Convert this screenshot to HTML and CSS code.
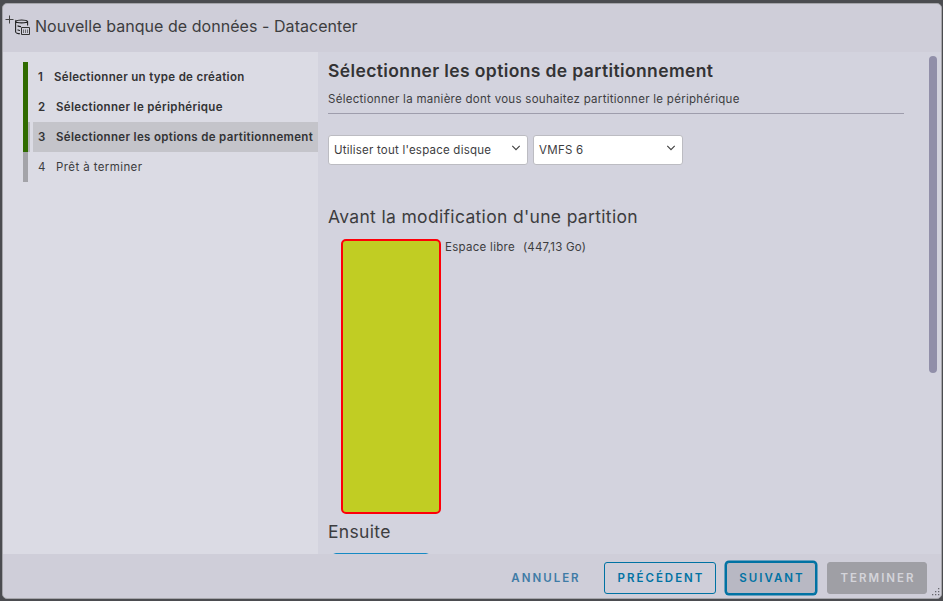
FILE: index.html
```
<!DOCTYPE html>
<html lang="fr">
<head>
<meta charset="utf-8">
<title>Nouvelle banque de données</title>
<link rel="stylesheet" href="styles.css">
</head>
<body>
<div class="modal">
  <header class="header">
    <svg class="title-icon" width="28" height="24" viewBox="0 0 28 24" fill="none" stroke="#222">
      <path d="M.5 5.5h8M4.5 1.5v8" stroke="#444"/>
      <path d="M10.6 7.5c1-2 11-2 12 0-1 1.8-11 1.8-12 0v10.3c0 1 2.3 2 4.4 2M22.6 7.5V11.500M12.500 11.8c1 .6 2 .8 3.500.8M12.500 15.800c1 .5 1.500.7 2.500.7" stroke-width="1.100"/>
      <path d="M16.500 13.500h8v7h-8z" stroke="#333"/>
      <path d="M18.500 15.500v3.500M20.500 15.500v3.500M22.500 15.500v3.500" stroke="#555" stroke-width=".8"/>
    </svg>
    <h1 class="title">Nouvelle banque de données - Datacenter</h1>
  </header>
  <div class="body">
    <nav class="sidebar">
      <ol class="steps">
        <li class="step done"><span class="num">1</span><span class="label first">Sélectionner un type de création</span></li>
        <li class="step done"><span class="num">2</span><span class="label">Sélectionner le périphérique</span></li>
        <li class="step done current"><span class="num">3</span><span class="label">Sélectionner les options de partitionnement</span></li>
        <li class="step"><span class="num">4</span><span class="label">Prêt à terminer</span></li>
      </ol>
    </nav>
    <main class="content">
      <div class="page">
        <h2 class="heading">Sélectionner les options de partitionnement</h2>
        <p class="intro">Sélectionner la manière dont vous souhaitez partitionner le périphérique</p>
        <div class="fields">
          <div class="select wide"><span class="usage">Utiliser tout l'espace disque</span><svg width="10" height="6" viewBox="0 0 10 6"><path d="M1.3.8 5 4.6 8.7.8" fill="none" stroke="#444" stroke-width="1.2"/></svg></div>
          <div class="select"><span>VMFS 6</span><svg width="10" height="6" viewBox="0 0 10 6"><path d="M1.3.8 5 4.6 8.7.8" fill="none" stroke="#444" stroke-width="1.2"/></svg></div>
        </div>
        <h3 class="section">Avant la modification d'une partition</h3>
        <div class="disk">
          <div class="partition"></div>
          <span class="free">Espace libre</span><span class="size">(447,13 Go)</span>
        </div>
        <h3 class="section after">Ensuite</h3>
        <div class="next-disk"></div>
      </div>
      <div class="scrollbar"></div>
    </main>
  </div>
  <footer class="footer">
    <button class="btn link">ANNULER</button>
    <button class="btn back">PRÉCÉDENT</button>
    <button class="btn next">SUIVANT</button>
    <button class="btn finish" disabled>TERMINER</button>
    <svg class="grip" width="8" height="8" viewBox="0 0 8 8" fill="#66666c"><path d="M6 0h1.3v1.3H6zM3 3h1.3v1.3H3zM6 3h1.3v1.3H6zM0 6h1.3v1.3H0zM3 6h1.3v1.3H3zM6 6h1.3v1.3H6z"/></svg>
  </footer>
</div>
</body>
</html>
```
FILE: styles.css
```
* { box-sizing: border-box; }
body {
  margin: 0;
  height: 601px;
  padding: 3px 1px 2px 2px;
  overflow: hidden;
  background: #4b4c50;
  font: 11.5px/16px Inter, "Open Sans", sans-serif;
  letter-spacing: .28px;
  color: #3d3d3f;
}
h1, h2, h3, p, ol { margin: 0; padding: 0; font-weight: 400; }
.modal {
  position: relative;
  display: flex;
  flex-direction: column;
  height: 596px;
  border: 1px solid #a5a5aa;
  border-radius: 5px;
  overflow: hidden;
  background: #cfced9;
}
.header { display: flex; flex: 0 0 48px; padding: 10px 0 0 2px; }
.title-icon { flex: none; }
.title {
  margin-left: 2px;
  font-size: 16px;
  line-height: 25px;
  letter-spacing: .05px;
  white-space: nowrap;
}
.body { display: flex; flex: 0 0 502px; overflow: hidden; }
.sidebar { flex: 0 0 315px; padding: 10px 0 0 20px; background: #dbdbe4; }
.steps { list-style: none; }
.step {
  display: flex;
  align-items: center;
  height: 30px;
  border-left: 5px solid #a3a3a8;
  padding-left: 10px;
  white-space: nowrap;
  letter-spacing: .4px;
}
.done { border-color: #306b00; font-weight: 600; letter-spacing: .34px; color: #333335; }
.current {
  background:
    linear-gradient(#b5b5bb, #b5b5bb) 0 0 / 2px 100% no-repeat,
    linear-gradient(90deg, transparent 5px, #c4c4ca 5px);
}
.num { flex: 0 0 18px; }
.label.first { margin-left: -2px; letter-spacing: .31px; }
.content { display: flex; flex: 1; overflow: hidden; background: #d3d3de; }
.page { flex: 0 0 586px; padding: 6px 0 0 10px; }
.heading {
  font-size: 17.5px;
  line-height: 26px;
  font-weight: 600;
  letter-spacing: .38px;
  color: #333335;
}
.intro { height: 30px; padding-top: 7px; border-bottom: 1px solid #9e9dac; }
.fields { display: flex; gap: 5px; margin-top: 21px; }
.select {
  display: flex;
  justify-content: space-between;
  width: 150px;
  height: 30px;
  padding: 6px 6px 0 5px;
  border: 1px solid #bcbcc2;
  border-radius: 3px;
  background: #fff;
}
.select.wide { width: 200px; }
.select svg { margin-top: 3px; }
.usage { letter-spacing: .22px; }
.section { margin-top: 38px; font-size: 17.5px; line-height: 28px; letter-spacing: .33px; }
.disk { display: flex; height: 275px; margin: 8px 0 0 13px; }
.partition {
  flex: 0 0 100px;
  margin-right: 4px;
  border: 2px solid #fe0008;
  border-radius: 5px;
  background: #c1cd23;
}
.size { margin-left: 8px; letter-spacing: .2px; }
.section.after { margin-top: 4px; }
.next-disk { width: 98px; height: 30px; margin: 7px 0 0 4px; border: 1px solid #168ac4; border-radius: 4px; }
.scrollbar { width: 8px; height: 317px; margin: 4px 0 0 25px; border-radius: 4px; background: #918fa9; }
.footer {
  display: flex;
  flex: 1;
  align-items: flex-start;
  justify-content: flex-end;
  padding: 8px 14px 0 0;
}
.btn {
  height: 32px;
  margin-left: 11px;
  padding: 0;
  border: 1px solid #0072a3;
  border-radius: 3px;
  background: none;
  font: 600 11.5px/30px Inter, sans-serif;
  letter-spacing: 2px;
  text-indent: 2px;
  color: #0072a3;
}
.link { width: 90px; margin-right: 3px; border-color: transparent; letter-spacing: 2px; color: #3e7ba6; }
.back { width: 112px; }
.next { width: 90px; margin-left: 10px; background: #b8b8c3; box-shadow: 0 0 0 1.5px #0072a3; }
.finish { width: 100px; border-color: #9f9fa5; background: #9f9fa5; color: #d4d4da; }
.grip { position: absolute; right: 1px; bottom: 2px; }
```
